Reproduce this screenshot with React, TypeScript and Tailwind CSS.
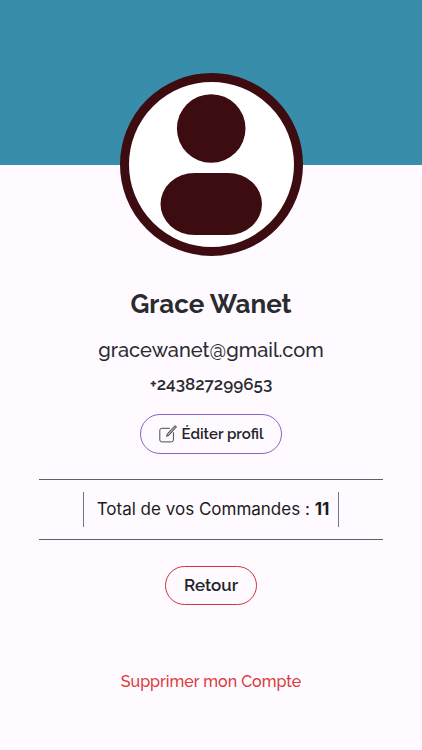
import React from "react";

type Profile = {
	name: string;
	email: string;
	phone: string;
	orders: number;
};

const profile: Profile = {
	name: "Grace Wanet",
	email: "gracewanet@gmail.com",
	phone: "+243827299653",
	orders: 11,
};

const pillBtn =
	"flex items-center justify-center rounded-full border font-semibold text-[#242428]";

function Avatar() {
	return (
		<div className="-mt-[92px] size-[183px] overflow-hidden rounded-full border-9 border-[#3d0c11] bg-white">
			<svg viewBox="0 0 165 165" className="size-full" fill="#3d0c11" role="img" aria-label="Photo de profil">
				<circle cx="82.2" cy="46.5" r="34.3" />
				<rect x="31.5" y="91" width="101.5" height="62" rx="34" ry="31" />
			</svg>
		</div>
	);
}

function EditIcon() {
	return (
		<svg viewBox="0 0 18 18" className="size-[18px] shrink-0" fill="none" stroke="#4a4a4e" strokeLinecap="round" strokeLinejoin="round" aria-hidden="true">
			<path d="M10.5 3.3H2.8A2 2 0 0 0 .8 5.3v9.6a2 2 0 0 0 2 2h9.6a2 2 0 0 0 2-2V7.6" strokeWidth="1" />
			<path d="M15.9.9a1 1 0 0 1 1.3 1.3L10 10.3l-2.4 1.1.8-2.5z" strokeWidth="1" fill="#a5a5a8" />
		</svg>
	);
}

export default function App() {
	return (
		<div className="flex min-h-screen flex-col items-center bg-[#fefaff] font-['Raleway','Lato',sans-serif] text-[#2b2b2f]">
			<div className="h-[165px] w-full bg-[#388dab]" />
			<Avatar />

			<h1 className="mt-8 text-[26px] leading-8 font-bold">{profile.name}</h1>
			<p className="mt-4 text-[20px] leading-7 font-medium">{profile.email}</p>
			<p className="mt-2 text-[17px] leading-6 font-semibold">{profile.phone}</p>

			<button type="button" className={`${pillBtn} mt-[18px] h-10 gap-[5px] border-[#8a63c4] px-[18px] text-[15px]`}>
				<EditIcon />
				Éditer profil
			</button>

			{/* Total des commandes */}
			<div className="mt-[25px] w-full px-[39px]">
				<div className="flex justify-center border-y border-[#626066] py-3">
					<p className="border-x border-[#77757b] pr-[9px] pl-[13px] font-['Inter',sans-serif] text-[17px] leading-[35px] text-[#1d1b20]">
						Total de vos Commandes : <strong className="font-bold">{profile.orders}</strong>
					</p>
				</div>
			</div>

			<button type="button" className={`${pillBtn} mt-[26px] h-[39px] border-[#c9383c] px-[18px] text-[17px]`}>
				Retour
			</button>
			<button type="button" className="mt-[65px] text-[16px] leading-6 font-medium text-[#dc3a3a]">
				Supprimer mon Compte
			</button>
		</div>
	);
}
